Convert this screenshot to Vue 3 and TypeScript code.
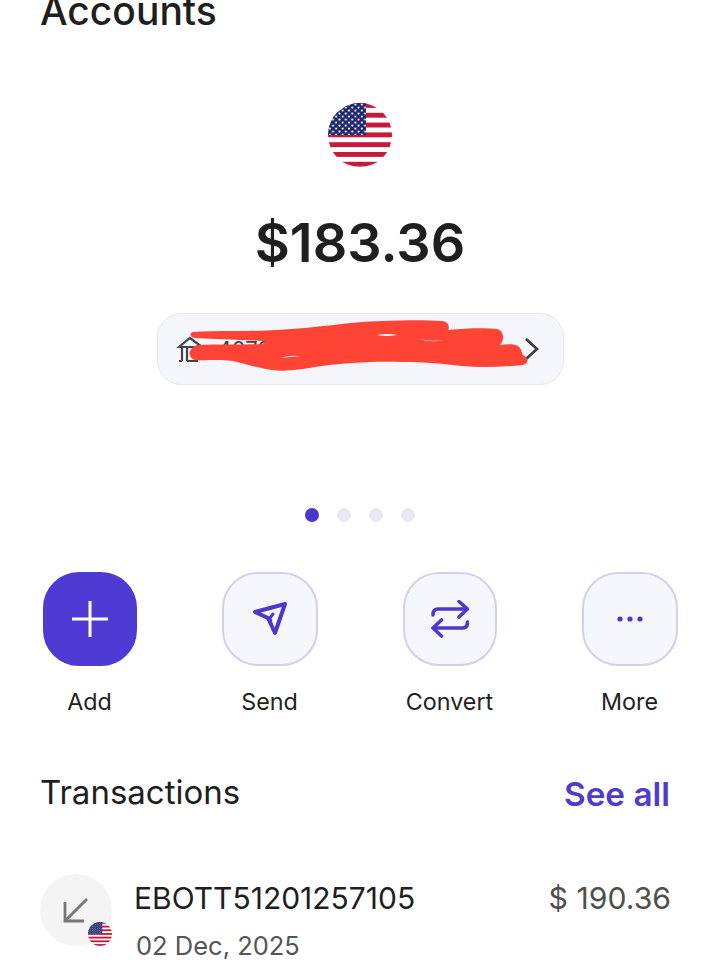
<template>
  <div class="screen">
    <svg width="0" height="0" class="defs" aria-hidden="true">
      <defs>
        <clipPath id="flag-clip"><circle cx="32" cy="32" r="32" /></clipPath>
        <pattern id="flag-stars" width="6.4" height="6" patternUnits="userSpaceOnUse">
          <circle cx="1.8" cy="1.6" r="1.05" fill="#fff" />
          <circle cx="5" cy="4.6" r="1.05" fill="#fff" />
        </pattern>
        <symbol id="us-flag" viewBox="0 0 64 64">
          <g clip-path="url(#flag-clip)">
            <rect width="64" height="64" fill="#fff" />
            <rect v-for="y in stripes" :key="y" x="0" :y="y" width="64" height="4.9" fill="#c8193c" />
            <rect width="38" height="32" fill="#1f2a6e" />
            <rect width="38" height="32" fill="url(#flag-stars)" />
          </g>
        </symbol>
      </defs>
    </svg>

    <h1 class="title">Accounts</h1>

    <section class="balance">
      <svg class="flag" width="64" height="64"><use href="#us-flag" /></svg>
      <div class="amount">$183.36</div>
      <div class="account-pill">
        <svg class="bank-icon" width="30" height="28" viewBox="0 0 30 28" fill="none" stroke="#444" stroke-width="2.2">
          <path d="M3 12 14 3l12 9H3Z" />
          <path d="M6 13v13M11 13v13M6 26h-3M11 26h11" />
        </svg>
        <span class="account-text">4070</span>
        <svg class="chevron" width="18" height="26" viewBox="0 0 18 26" fill="none" stroke="#3c3c3c" stroke-width="2.6">
          <path d="M3 3l11 10L3 23" />
        </svg>
        <!-- the red scribble that hides the account name -->
        <svg class="scribble" width="407" height="72" viewBox="0 0 407 72">
          <path
            fill="#ff4436"
            d="M36 19C60 17 90 19 120 17C160 15 190 9 225 8C250 7 270 7 285 8C292 9 293 14 291 17C310 15 330 15 340 16C348 18 347 28 343 32C350 31 358 31 361 33C365 36 364 39 366 42C372 45 372 50 366 52C345 54 325 55 305 53C285 51 270 49 245 49C215 48 190 50 165 53C145 56 130 59 115 57C100 55 90 51 76 48C60 46 50 48 38 47C31 45 30 36 40 32C60 31 90 32 106 31L108 28C85 27 60 26 38 25C33 24 32 20 36 19Z"
          />
          <path fill="#f5f6fb" d="M220 22q10-2 20 0q-10 2-20 0ZM262 26q12 3 24 1q-12 3-24-1ZM123 45q10-3 20-2q-10 1-20 2Z" />
        </svg>
      </div>
    </section>

    <div class="dots">
      <span v-for="n in 4" :key="n" class="dot" :class="{ 'dot--active': n === 1 }"></span>
    </div>

    <div class="actions">
      <div v-for="action in actions" :key="action.label" class="action">
        <div
          class="action__btn"
          :class="{ 'action__btn--primary': action.primary, 'action__btn--narrow': action.narrow }"
        >
          <svg v-if="action.label === 'Add'" width="38" height="38" viewBox="0 0 38 38" stroke="#fff" stroke-width="3">
            <path d="M19 1v36M1 19h36" />
          </svg>
          <svg v-else-if="action.label === 'Send'" width="36" height="36" viewBox="0 0 36 36" fill="none" stroke="#4b39cf" stroke-width="4" stroke-linecap="round" stroke-linejoin="round">
            <path d="M33 3 3 11l13 6 7 15L33 3Z" />
            <path d="M21 13l-3 4 1 6" stroke-width="3" />
          </svg>
          <svg v-else-if="action.label === 'Convert'" width="38" height="38" viewBox="0 0 38 38" fill="none" stroke="#4b39cf" stroke-width="3.6" stroke-linecap="round" stroke-linejoin="round">
            <path d="M2 15c0-4 1.500-6 5-6h29" />
            <path d="M28 1.500l8.500 7.500-8.500 8" />
            <path d="M36.500 22c0 4-1.500 6-5 6H2" />
            <path d="M10.500 20 2 28l8.500 8" />
          </svg>
          <svg v-else width="26" height="6" viewBox="0 0 26 6" fill="#4b39cf">
            <circle cx="3" cy="3" r="2.6" />
            <circle cx="13" cy="3" r="2.6" />
            <circle cx="23" cy="3" r="2.6" />
          </svg>
        </div>
        <span class="action__label">{{ action.label }}</span>
      </div>
    </div>

    <div class="tx-header">
      <h2 class="tx-header__title">Transactions</h2>
      <a class="tx-header__link">See all</a>
    </div>

    <div class="tx-row">
      <div class="tx-icon">
        <svg width="26" height="26" viewBox="0 0 26 26" fill="none" stroke="#777" stroke-width="2.8">
          <path d="M24 2 3 23" />
          <path d="M2 5v19h19" />
        </svg>
        <svg class="tx-icon__flag" width="24" height="24"><use href="#us-flag" /></svg>
      </div>
      <div class="tx-info">
        <div class="tx-info__name">EBOTT51201257105</div>
        <div class="tx-info__date">02 Dec, 2025</div>
      </div>
      <div class="tx-amount">$ 190.36</div>
    </div>
  </div>
</template>

<script setup lang="ts">
interface Action {
  label: string
  primary?: boolean
  narrow?: boolean
}

const stripes: number[] = [0, 9.8, 19.6, 29.4, 39.2, 49, 58.8]

const actions: Action[] = [
  { label: 'Add', primary: true, narrow: true },
  { label: 'Send' },
  { label: 'Convert', narrow: true },
  { label: 'More' },
]
</script>

<style>
html,
body {
  margin: 0;
  background: #fff;
}
</style>

<style scoped>
.screen {
  width: 720px;
  height: 980px;
  overflow: hidden;
  background: #fff;
  color: #201e1e;
  font-family: Inter, "Liberation Sans", sans-serif;
}

.defs {
  position: absolute;
}

.title {
  margin: -11px 0 0 40px;
  font-size: 39px;
  line-height: 44px;
  font-weight: 500;
}

.balance {
  display: flex;
  flex-direction: column;
  align-items: center;
  margin-top: 70px;
}

.flag {
  display: block;
}

.amount {
  margin-top: 38px;
  font-size: 54px;
  line-height: 76px;
  font-weight: 600;
}

.account-pill {
  position: relative;
  display: flex;
  align-items: center;
  justify-content: space-between;
  box-sizing: border-box;
  width: 407px;
  height: 72px;
  margin-top: 32px;
  padding: 0 22px 0 18px;
  border: 1px solid #e6e7ef;
  border-radius: 24px;
  background: #f5f6fb;
}

.account-text {
  flex: 1;
  margin-left: 12px;
  font-size: 22px;
  color: #444;
}

.scribble {
  position: absolute;
  left: -1px;
  top: -1px;
}

.dots {
  display: flex;
  justify-content: center;
  align-items: center;
  gap: 18px;
  margin-top: 123px;
}

.dot {
  width: 14px;
  height: 14px;
  border-radius: 50%;
  background: #e8e8f6;
}

.dot--active {
  background: #4a38c8;
}

.actions {
  display: grid;
  grid-template-columns: repeat(4, 1fr);
  margin-top: 50px;
}

.action {
  display: flex;
  flex-direction: column;
  align-items: center;
}

.action__btn {
  display: flex;
  align-items: center;
  justify-content: center;
  box-sizing: border-box;
  width: 96px;
  height: 94px;
  border: 2px solid #d4cfee;
  border-radius: 36px;
  background: #f6f6fd;
}

.action__btn--narrow {
  width: 94px;
}

.action__btn--primary {
  border-color: #4d3bd4;
  background: #4d3bd4;
}

.action__label {
  margin-top: 22px;
  margin-right: 1px;
  font-size: 23.3px;
  line-height: 28px;
  color: #232222;
}

.tx-header {
  display: flex;
  align-items: center;
  justify-content: space-between;
  margin-top: 54px;
  padding: 0 50px 0 40px;
}

.tx-header__title {
  margin: 0;
  font-size: 33px;
  line-height: 40px;
  font-weight: 400;
}

.tx-header__link {
  margin-top: 4px;
  font-size: 33.3px;
  line-height: 40px;
  font-weight: 600;
  color: #4f3bd0;
}

.tx-row {
  display: flex;
  align-items: flex-start;
  margin-top: 60px;
  padding: 0 49px 0 40px;
}

.tx-icon {
  position: relative;
  display: flex;
  align-items: center;
  justify-content: center;
  flex-shrink: 0;
  width: 72px;
  height: 72px;
  border-radius: 50%;
  background: #f4f4f4;
}

.tx-icon__flag {
  position: absolute;
  right: 0;
  bottom: 0;
}

.tx-info {
  flex: 1;
  margin-left: 22px;
}

.tx-info__name {
  font-size: 30px;
  line-height: 48px;
}

.tx-info__date {
  margin-left: 2px;
  font-size: 25.5px;
  line-height: 48px;
  color: #555;
}

.tx-amount {
  font-size: 30.2px;
  line-height: 48px;
  color: #4f4f4f;
}
</style>
